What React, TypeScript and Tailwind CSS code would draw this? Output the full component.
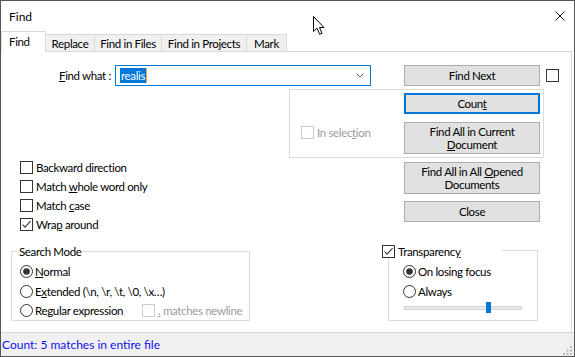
import React from 'react';

type BoxProps = { checked?: boolean; disabled?: boolean };

const CheckBox: React.FC<BoxProps> = ({ checked = false, disabled = false }) => (
  <span
    className={`flex h-[13px] w-[13px] shrink-0 items-center justify-center border bg-white ${
      disabled ? 'border-[#cccccc]' : 'border-[#333333]'
    }`}
  >
    {checked && (
      <svg width="11" height="11" viewBox="0 0 11 11">
        <path d="M1.5 5.5 L4 8.2 L9.6 2.2" fill="none" stroke="#333333" strokeWidth="1.1" />
      </svg>
    )}
  </span>
);

const Radio: React.FC<{ checked?: boolean }> = ({ checked = false }) => (
  <svg width="13" height="13" viewBox="0 0 13 13" className="shrink-0">
    <circle cx="6.5" cy="6.5" r="6" fill="#ffffff" stroke="#333333" strokeWidth="1" />
    {checked && <circle cx="6.5" cy="6.5" r="3.3" fill="#333333" />}
  </svg>
);

const Option: React.FC<{ children: React.ReactNode; checked?: boolean; className?: string }> = ({
  children,
  checked,
  className = '',
}) => (
  <div className={`flex items-center gap-[3px] ${className}`}>
    <CheckBox checked={checked} />
    <span>{children}</span>
  </div>
);

const Choice: React.FC<{ children: React.ReactNode; checked?: boolean; className?: string }> = ({
  children,
  checked,
  className = '',
}) => (
  <div className={`flex items-center gap-[2px] ${className}`}>
    <Radio checked={checked} />
    <span>{children}</span>
  </div>
);

const Button: React.FC<{ children: React.ReactNode; className?: string; focused?: boolean }> = ({
  children,
  className = '',
  focused = false,
}) => (
  <div
    className={`flex w-[136px] flex-col items-center justify-center bg-[#e1e1e1] text-center leading-[13px] ${
      focused ? 'border-2 border-[#0078d7]' : 'border border-[#adadad]'
    } ${className}`}
  >
    {children}
  </div>
);

const tabs = [
  { label: 'Replace', w: 'w-[49px]' },
  { label: 'Find in Files', w: 'w-[67px]' },
  { label: 'Find in Projects', w: 'w-[85px]' },
  { label: 'Mark', w: 'w-[40px]' },
];

export default function App() {
  return (
    <div className="relative flex h-[357px] w-[575px] flex-col border border-[#555555] bg-white font-['Lato',sans-serif] text-[11.5px] leading-[15px] tracking-[-0.35px] text-black">
      {/* title bar */}
      <div className="flex h-[30px] shrink-0 items-center justify-between pl-[8px] pr-[9px]">
        <span className="pt-[1px] text-[12px] tracking-normal">Find</span>
        <svg width="10" height="10" viewBox="0 0 10 10">
          <path d="M0.5 0.5 L9.5 9.5 M9.5 0.5 L0.5 9.5" stroke="#111111" strokeWidth="1" />
        </svg>
      </div>

      {/* tabs */}
      <div className="flex h-[21px] w-[571px] shrink-0 items-end">
        <div className="h-[21px] w-[45px] border-l border-r border-t border-[#d9d9d9] bg-white pl-[7px] pt-[2px]">
          Find
        </div>
        {tabs.map((t) => (
          <div
            key={t.label}
            className={`flex h-[18px] ${t.w} items-center justify-center border-b border-r border-t border-[#d9d9d9] bg-[#f0f0f0]`}
          >
            {t.label}
          </div>
        ))}
        <div className="h-px flex-1 bg-[#d9d9d9]" />
      </div>

      {/* tab page */}
      <div className="flex w-[571px] flex-1 flex-col border-r border-[#d9d9d9]">
        {/* find what row */}
        <div className="mt-[12px] flex h-[22px] items-center">
          <div className="w-[110px] text-right">
            <u>F</u>ind what :
          </div>
          <div className="ml-[4px] flex h-[21px] w-[256px] items-center border border-[#0078d7] pl-[4px] pr-[6px]">
            <span className="h-[15px] bg-[#0078d7] px-[1px] text-white">realis</span>
            <span className="h-[15px] w-px bg-[#f5a142]" />
            <svg width="8" height="5" viewBox="0 0 8 5" className="ml-auto">
              <path d="M0.5 0.5 L4 4 L7.5 0.5" fill="none" stroke="#555555" strokeWidth="1" />
            </svg>
          </div>
          <Button className="ml-[33px] h-[21px]">Find Next</Button>
          <span className="ml-[6px]">
            <CheckBox />
          </span>
        </div>

        {/* in selection group */}
        <div className="ml-[288px] mt-[3px] flex h-[69px] w-[255px] border border-[#dcdcdc]">
          <div className="w-[114px] pl-[11px] pt-[35px]">
            <div className="flex items-center gap-[3px] text-[#9b9b9b]">
              <CheckBox disabled />
              <span>
                In selec<u>t</u>ion
              </span>
            </div>
          </div>
          <div className="flex flex-col pt-[3px]">
            <Button focused className="h-[21px]">
              <span>
                Coun<u>t</u>
              </span>
            </Button>
            <Button className="mt-[8px] h-[32px]">
              <span>Find All in Current</span>
              <span>
                <u>D</u>ocument
              </span>
            </Button>
          </div>
        </div>

        {/* options + buttons */}
        <div className="flex">
          <div className="ml-[19px] flex w-[384px] flex-col">
            <Option className="h-[19px]">Backward direction</Option>
            <Option className="h-[19px]">
              Match <u>w</u>hole word only
            </Option>
            <Option className="h-[19px]">
              Match <u>c</u>ase
            </Option>
            <Option className="h-[19px]" checked>
              Wra<u>p</u> around
            </Option>
          </div>
          <div className="flex flex-col pt-[4px]">
            <Button className="h-[32px]">
              <span>
                Find All in All <u>O</u>pened
              </span>
              <span>Documents</span>
            </Button>
            <Button className="mt-[7px] h-[21px]">Close</Button>
          </div>
        </div>

        {/* search mode + transparency */}
        <div className="mt-[11px] flex items-start">
          <div className="relative ml-[10px] mt-[6px] h-[70px] w-[239px] border border-[#dcdcdc] pl-[8px] pt-[10px]">
            <span className="absolute -top-[8px] left-[6px] bg-white px-[1px]">Search Mode</span>
            <Choice className="h-[19px]" checked>
              <u>N</u>ormal
            </Choice>
            <Choice className="h-[20px]">
              E<u>x</u>tended {'(\\n, \\r, \\t, \\0, \\x…)'}
            </Choice>
            <div className="flex h-[19px] items-center">
              <Choice className="w-[122px]">
                Re<u>g</u>ular expression
              </Choice>
              <div className="flex items-center gap-[3px] text-[#9b9b9b]">
                <CheckBox disabled />
                <span>
                  <u>.</u> matches newline
                </span>
              </div>
            </div>
          </div>

          <div className="relative ml-[138px] mt-[5px] h-[71px] w-[150px] border border-[#dcdcdc] pl-[14px] pt-[11px]">
            <div className="absolute -left-[7px] -top-[6px] flex h-[13px] w-[120px] items-center gap-[3px] bg-white">
              <CheckBox checked />
              <span>
                Transparenc<u>y</u>
              </span>
            </div>
            <Choice className="h-[19px]" checked>
              On losing focus
            </Choice>
            <Choice className="h-[20px]">Always</Choice>
            <div className="relative ml-[1px] mt-[5px] h-[4px] w-[118px] border border-[#d6d6d6] bg-[#e7eaea]">
              <span className="absolute -top-[5px] left-[81px] h-[11px] w-[5px] bg-[#0078d7]" />
            </div>
          </div>
        </div>
      </div>

      {/* status bar */}
      <div className="flex h-[24px] shrink-0 items-center justify-between border-t border-[#d4d4d4] bg-[#f0f0f0] pl-[1px] pr-[1px]">
        <span className="text-[12px] tracking-normal text-[#1010f0]">Count: 5 matches in entire file</span>
        <svg width="10" height="10" viewBox="0 0 10 10" className="mt-[12px]">
          <rect x="7" y="0" width="2" height="2" fill="#b8b8b8" />
          <rect x="3.5" y="3.5" width="2" height="2" fill="#b8b8b8" />
          <rect x="7" y="3.5" width="2" height="2" fill="#b8b8b8" />
          <rect x="0" y="7" width="2" height="2" fill="#b8b8b8" />
          <rect x="3.5" y="7" width="2" height="2" fill="#b8b8b8" />
          <rect x="7" y="7" width="2" height="2" fill="#b8b8b8" />
        </svg>
      </div>

      {/* mouse pointer over the title bar */}
      <svg
        width="14"
        height="20"
        viewBox="0 0 14 20"
        className="pointer-events-none absolute left-[312px] top-[15px]"
      >
        <path
          d="M0.5 0.5 L0.5 15.5 L4 12.2 L6.6 18.3 L9 17.3 L6.5 11.5 L11 11.5 Z"
          fill="#ffffff"
          stroke="#000000"
          strokeWidth="1"
        />
      </svg>
    </div>
  );
}
